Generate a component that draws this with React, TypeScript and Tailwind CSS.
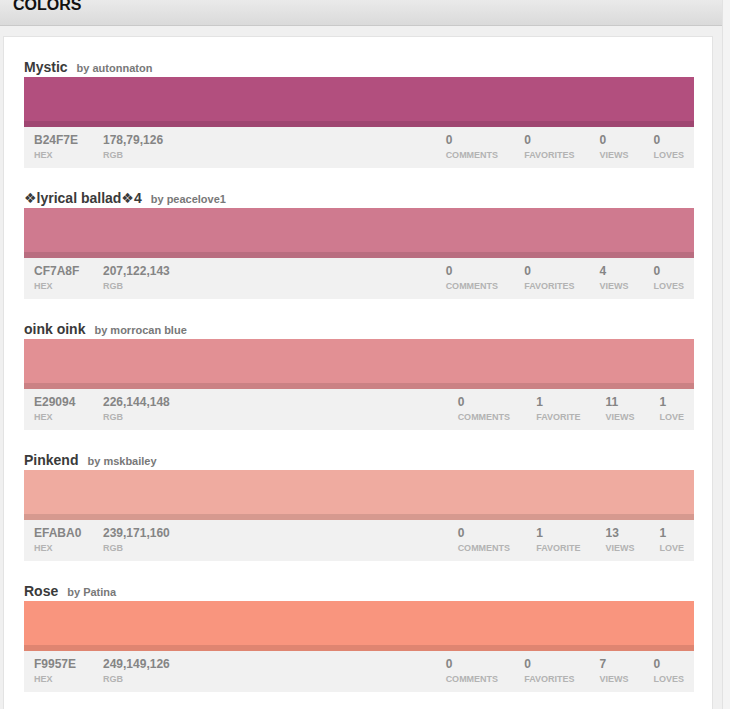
import React from "react";

type Item = {
  name: string;
  by: string;
  hex: string;
  rgb: string;
  comments: number;
  favorites: number;
  views: number;
  loves: number;
};

const items: Item[] = [
  { name: "Mystic", by: "autonnaton", hex: "B24F7E", rgb: "178,79,126", comments: 0, favorites: 0, views: 0, loves: 0 },
  { name: "❖lyrical ballad❖4", by: "peacelove1", hex: "CF7A8F", rgb: "207,122,143", comments: 0, favorites: 0, views: 4, loves: 0 },
  { name: "oink oink", by: "morrocan blue", hex: "E29094", rgb: "226,144,148", comments: 0, favorites: 1, views: 11, loves: 1 },
  { name: "Pinkend", by: "mskbailey", hex: "EFABA0", rgb: "239,171,160", comments: 0, favorites: 1, views: 13, loves: 1 },
  { name: "Rose", by: "Patina", hex: "F9957E", rgb: "249,149,126", comments: 0, favorites: 0, views: 7, loves: 0 },
];

function Stat({ value, label, className }: { value: number; label: string; className?: string }) {
  return (
    <div className={"flex flex-col " + (className ?? "")}>
      <span className="text-[12px] leading-[14px] font-bold text-[#858585]">{value}</span>
      <span className="mt-[3px] text-[9px] leading-[11px] font-bold text-[#b3b3b3]">{label}</span>
    </div>
  );
}

function ColorBlock({ item }: { item: Item }) {
  return (
    <div className="mb-[21px]">
      <div className="flex items-baseline h-[19px] leading-[18px]">
        <span className="text-[14px] font-bold text-[#3a3a3a]">{item.name}</span>
        <span className="ml-[9px] text-[11px] font-bold text-[#787878]">by {item.by}</span>
      </div>
      <div className="h-[50px] flex flex-col" style={{ backgroundColor: "#" + item.hex }}>
        <div className="flex-1" />
        <div className="h-[6px] bg-black/10" />
      </div>
      <div className="h-[41px] bg-[#f1f1f1] flex pt-[6px] pl-[10px] pr-[10px]">
        <div className="w-[69px] flex flex-col">
          <span className="text-[12px] leading-[14px] font-bold text-[#858585]">{item.hex}</span>
          <span className="mt-[3px] text-[9px] leading-[11px] font-bold text-[#b3b3b3]">HEX</span>
        </div>
        <div className="flex flex-col">
          <span className="text-[12px] leading-[14px] font-bold text-[#858585]">{item.rgb}</span>
          <span className="mt-[3px] text-[9px] leading-[11px] font-bold text-[#b3b3b3]">RGB</span>
        </div>
        <div className="ml-auto flex">
          <Stat value={item.comments} label="COMMENTS" />
          <Stat className="ml-[26px]" value={item.favorites} label={item.favorites === 1 ? "FAVORITE" : "FAVORITES"} />
          <Stat className="ml-[25px]" value={item.views} label="VIEWS" />
          <Stat className="ml-[25px]" value={item.loves} label={item.loves === 1 ? "LOVE" : "LOVES"} />
        </div>
      </div>
    </div>
  );
}

export default function App() {
  return (
    <div
      className="w-[730px] h-[709px] overflow-hidden bg-[#f4f4f4] flex"
      style={{ fontFamily: '"Liberation Sans", Arial, "DejaVu Sans", sans-serif' }}
    >
      <div className="w-[723px] shrink-0 bg-[#f0f0f0] border-r border-[#e2e2e2] flex flex-col">
        <div className="h-[26px] shrink-0 bg-gradient-to-b from-[#eaeaea] to-[#dadada] border-b border-[#c9c9c9] overflow-hidden">
          <div className="mt-[-3px] ml-[13px] text-[16px] leading-[16px] font-bold text-[#111]">COLORS</div>
        </div>
        <div className="pt-[10px] pl-[3px] pr-[9px]">
          <div className="bg-white border border-[#e3e3e3] pt-[21px] pl-[20px] pr-[18px]">
            {items.map((it) => (
              <ColorBlock key={it.hex} item={it} />
            ))}
          </div>
        </div>
      </div>
    </div>
  );
}
